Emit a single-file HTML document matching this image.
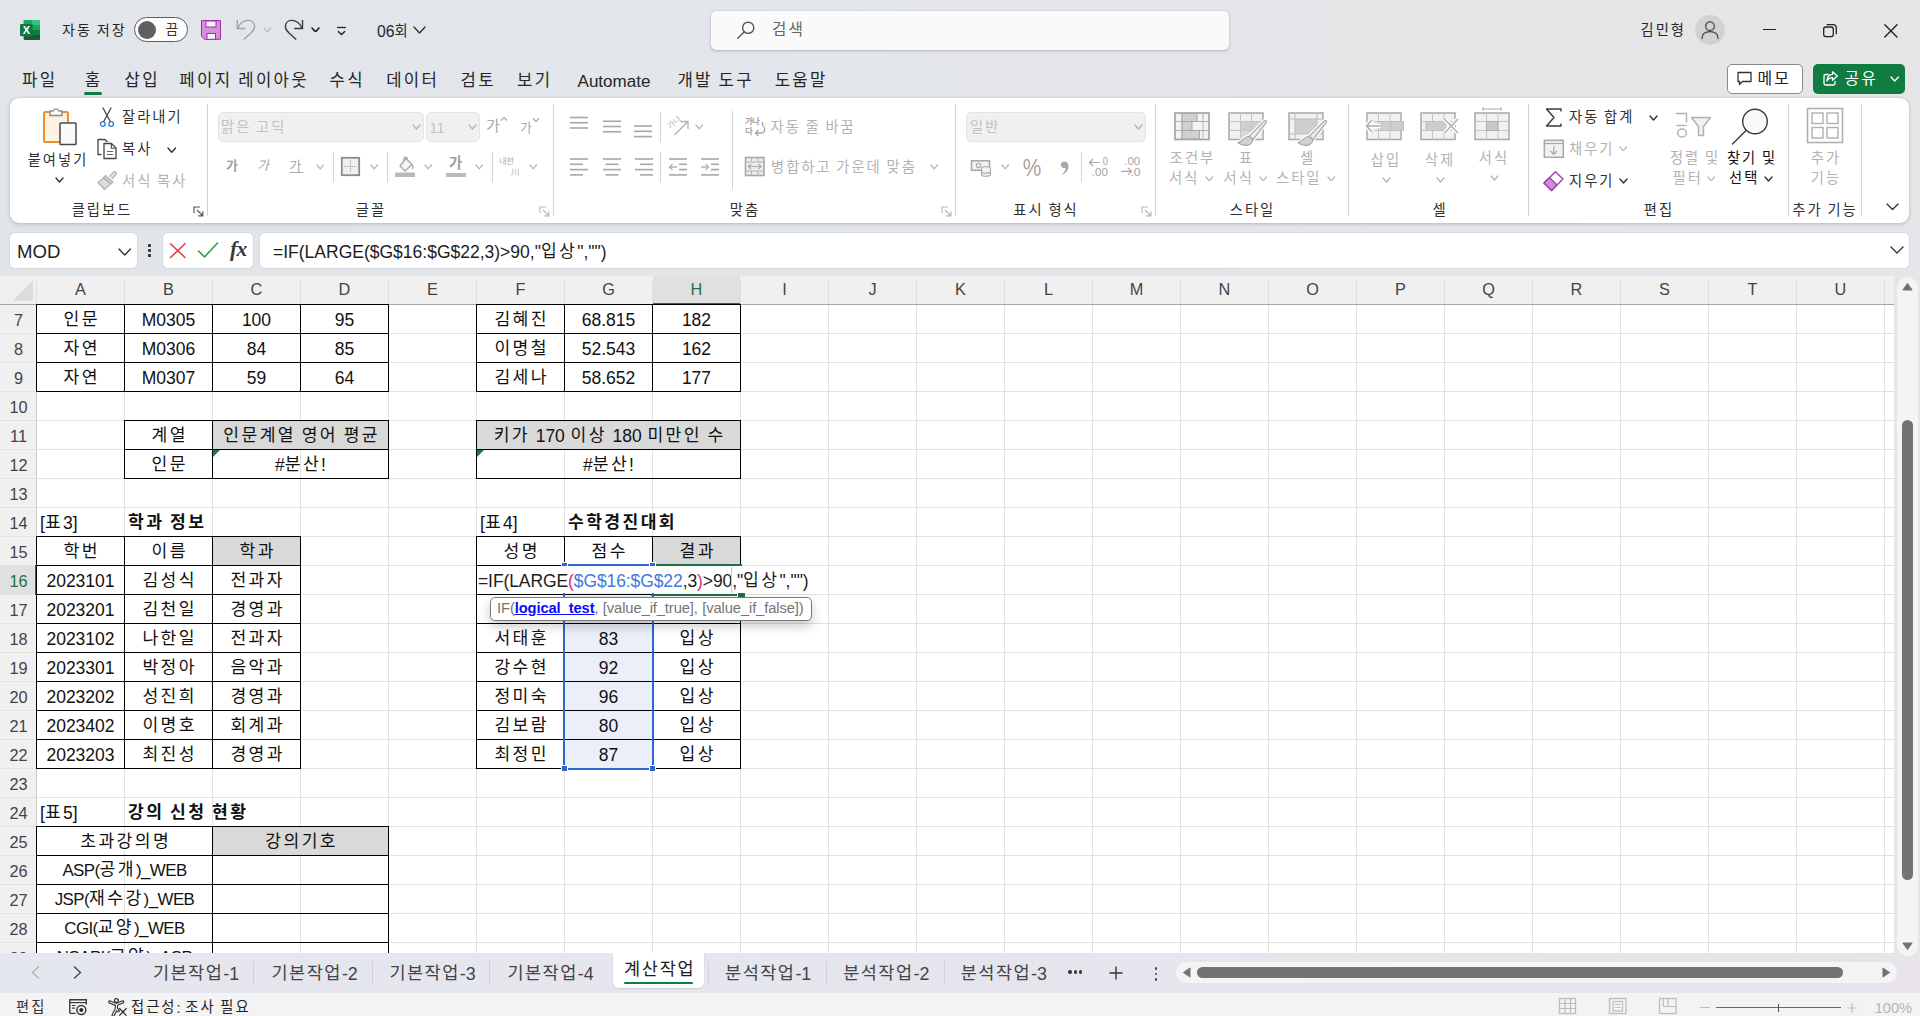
<!DOCTYPE html>
<html lang="ko"><head><meta charset="utf-8"><title>Excel</title><style>
html,body{margin:0;padding:0}
body{width:1920px;height:1016px;overflow:hidden;position:relative;font-family:"Liberation Sans","Noto Sans CJK KR",sans-serif;
background:linear-gradient(to right,#e2e6ea 0%,#e3e6ea 45%,#e5e5e8 70%,#e6e6e6 100%)}
#r{position:absolute;left:0;top:0;width:1920px;height:1016px;overflow:hidden}
#r div,#r svg{position:absolute}

.t{white-space:nowrap;overflow:visible;letter-spacing:.14em;word-spacing:-1.2px}
.l{font-size:1.021em;letter-spacing:0;position:relative;top:.06em}
.lu{font-size:.985em;letter-spacing:-.55px}
.c{box-sizing:border-box;display:flex;align-items:center;justify-content:center;white-space:nowrap;color:#111;overflow:hidden;line-height:28px;padding-bottom:1px;letter-spacing:.14em;word-spacing:-1.5px}
#bb{background:linear-gradient(to right,#e5e7ee 0%,#e6e5ed 50%,#e9e3eb 100%)}
</style></head><body><div id="r">
<div style="left:0;top:215px;width:1920px;height:62px;background:linear-gradient(to right,#e1e5ea 0%,#e3e5ea 50%,#e7e5ea 100%)"></div>
<svg style="left:19px;top:19px;" width="22" height="22" viewBox="0 0 22 22">
<rect x="4.75" y="1" width="16.25" height="20" rx="1.3" fill="#21a366"/>
<path d="M4.75 1 H12.9 V6 H4.75 Z" fill="#21a366"/><path d="M12.9 1 H19.7 A1.3 1.3 0 0 1 21 2.3 V6 H12.9 Z" fill="#33c481"/>
<rect x="4.75" y="6" width="8.15" height="5" fill="#107c41"/><rect x="12.9" y="6" width="8.1" height="5" fill="#21a366"/>
<rect x="4.75" y="11" width="8.15" height="5" fill="#185c37"/><rect x="12.9" y="11" width="8.1" height="5" fill="#107c41"/>
<path d="M4.75 16 H21 V19.7 A1.3 1.3 0 0 1 19.7 21 H6 A1.3 1.3 0 0 1 4.75 19.7 Z" fill="#185c37"/>
<rect x="1" y="5" width="12.8" height="12.3" rx="1.2" fill="#0f7a40"/>
<text x="7.4" y="15.1" font-family="Liberation Sans,sans-serif" font-weight="700" font-size="11" fill="#fff" text-anchor="middle">X</text>
</svg>
<div class="t" style="left:62px;top:18px;width:70px;height:24px;line-height:24px;font-size:14.11px;color:#262626;text-align:left;word-spacing:-1px">자동 저장</div>
<div style="left:134px;top:17px;width:54px;height:25px;border:1px solid #5c5c5c;border-radius:13px;background:#fdfdfd;box-sizing:border-box"></div>
<div style="left:138px;top:21px;width:18px;height:18px;border-radius:50%;background:#5f5f5f"></div>
<div class="t" style="left:160px;top:18px;width:24px;height:24px;line-height:24px;font-size:13.39px;color:#333;text-align:center;text-indent:.14em;">끔</div>
<svg style="left:200px;top:19px;" width="22" height="22" viewBox="0 0 22 22">
<path d="M1.5 1.5 H20.5 V20.3 H4.5 L1.5 17.3 Z" fill="#d58fdc" stroke="#9b2fa5" stroke-width="1"/>
<rect x="6" y="2" width="10" height="6" fill="#fbf3fb" stroke="#9b2fa5" stroke-width="1"/>
<rect x="7" y="14.5" width="8.5" height="5.8" fill="#fbf3fb" stroke="#9b2fa5" stroke-width="1"/>
</svg>
<svg style="left:234px;top:17px;" width="24" height="25" viewBox="234 17 24 25"><path d="M237.3 20 V28.5 H245.4" fill="none" stroke="#a3a3a3" stroke-width="1.4"/><path d="M237.6 28.2 C240 23 244 20.4 248.3 20.4 C252 20.4 254.6 23 254.6 26.7 C254.6 29.5 253 31 251 33 L243.75 39.6" fill="none" stroke="#a3a3a3" stroke-width="1.4"/></svg>
<svg style="left:263px;top:26.5px;" width="8.8" height="5.7" viewBox="0 0 8.8 5.7"><path d="M1 1 L4.4 4.7 L7.8 1" fill="none" stroke="#bdbdbd" stroke-width="1.2" stroke-linecap="round" stroke-linejoin="round"/></svg>
<svg style="left:283px;top:17px;" width="24" height="25" viewBox="283 17 24 25"><path d="M302.5 20 V28.5 H294.2" fill="none" stroke="#3a3a3a" stroke-width="1.4"/><path d="M302.2 28.2 C299.8 23 295.8 20.4 291.5 20.4 C288 20.4 285.4 23 285.4 26.7 C285.4 29.5 287 31 289 33 L296.2 39.6" fill="none" stroke="#3a3a3a" stroke-width="1.4"/></svg>
<svg style="left:311px;top:26.5px;" width="9" height="5.9" viewBox="0 0 9 5.9"><path d="M1 1 L4.5 4.9 L8 1" fill="none" stroke="#222" stroke-width="1.6" stroke-linecap="round" stroke-linejoin="round"/></svg>
<svg style="left:335px;top:24px;" width="14" height="13" viewBox="335 24 14 13"><path d="M337 27.5 H345.8" stroke="#222" stroke-width="1.3"/><path d="M338 31.3 L341.5 34.5 L345 31.3" fill="none" stroke="#222" stroke-width="1.5"/></svg>
<div class="t" style="left:377px;top:19px;width:34px;height:24px;line-height:24px;font-size:14.29px;color:#262626;text-align:left;"><span class="l" style="font-size:1.1em">06</span>회</div>
<svg style="left:413px;top:26px;" width="13" height="8" viewBox="0 0 13 8"><path d="M1 1 L6.5 7 L12 1" fill="none" stroke="#333" stroke-width="1.4" stroke-linecap="round" stroke-linejoin="round"/></svg>
<div style="left:711px;top:11px;width:518px;height:39px;background:#fafafa;border-radius:5px;box-shadow:0 1px 3px rgba(0,0,0,.22),0 0 1px rgba(0,0,0,.18)"></div>
<svg style="left:735px;top:19px;" width="22" height="22" viewBox="0 0 22 22"><circle cx="13.2" cy="8.8" r="5.6" fill="none" stroke="#555" stroke-width="1.4"/><path d="M9.2 12.8 L2.8 19.2" stroke="#555" stroke-width="1.4" stroke-linecap="round"/></svg>
<div class="t" style="left:772px;top:18px;width:60px;height:24px;line-height:24px;font-size:15.63px;color:#666;text-align:left;">검색</div>
<div class="t" style="left:1630px;top:18px;width:56px;height:24px;line-height:24px;font-size:14.29px;color:#262626;text-align:right;">김민형</div>
<div style="left:1695px;top:15px;width:30px;height:30px;border-radius:50%;background:#d2d2d2"></div>
<svg style="left:1699px;top:19px;" width="22" height="22" viewBox="0 0 22 22"><circle cx="11" cy="7.2" r="4.3" fill="none" stroke="#4a4a4a" stroke-width="1.3"/><path d="M3 19.5 C3 14.5 6.5 12.6 11 12.6 C15.5 12.6 19 14.5 19 19.5" fill="none" stroke="#4a4a4a" stroke-width="1.3" stroke-linecap="round"/></svg>
<div style="left:1763px;top:29px;width:13px;height:1.4px;background:#222"></div>
<svg style="left:1822px;top:23px;" width="16" height="16" viewBox="0 0 16 16"><rect x="1.7" y="4" width="9.6" height="9.6" rx="2" fill="none" stroke="#222" stroke-width="1.3"/><path d="M4.6 1.7 H11.3 A3 3 0 0 1 14.3 4.7 V11.2" fill="none" stroke="#222" stroke-width="1.3"/></svg>
<svg style="left:1883px;top:23px;" width="16" height="16" viewBox="0 0 16 16"><path d="M1.8 1.8 L14 14 M14 1.8 L1.8 14" stroke="#222" stroke-width="1.4" stroke-linecap="round"/></svg>
<div class="t" style="left:-41.5px;top:67px;width:160px;height:27px;line-height:27px;font-size:16.7px;color:#262626;text-align:center;text-indent:.14em;">파일</div>
<div class="t" style="left:12.5px;top:67px;width:160px;height:27px;line-height:27px;font-size:16.7px;color:#262626;text-align:center;text-indent:.14em;">홈</div>
<div class="t" style="left:61px;top:67px;width:160px;height:27px;line-height:27px;font-size:16.7px;color:#262626;text-align:center;text-indent:.14em;">삽입</div>
<div class="t" style="left:163px;top:67px;width:160px;height:27px;line-height:27px;font-size:16.7px;color:#262626;text-align:center;text-indent:.14em;">페이지 레이아웃</div>
<div class="t" style="left:266px;top:67px;width:160px;height:27px;line-height:27px;font-size:16.7px;color:#262626;text-align:center;text-indent:.14em;">수식</div>
<div class="t" style="left:331.5px;top:67px;width:160px;height:27px;line-height:27px;font-size:16.7px;color:#262626;text-align:center;text-indent:.14em;">데이터</div>
<div class="t" style="left:397px;top:67px;width:160px;height:27px;line-height:27px;font-size:16.7px;color:#262626;text-align:center;text-indent:.14em;">검토</div>
<div class="t" style="left:453.5px;top:67px;width:160px;height:27px;line-height:27px;font-size:16.7px;color:#262626;text-align:center;text-indent:.14em;">보기</div>
<div class="t" style="left:534px;top:67px;width:160px;height:27px;line-height:27px;font-size:16.7px;color:#262626;text-align:center;"><span class="l">Automate</span></div>
<div class="t" style="left:634.5px;top:67px;width:160px;height:27px;line-height:27px;font-size:16.7px;color:#262626;text-align:center;text-indent:.14em;">개발 도구</div>
<div class="t" style="left:720px;top:67px;width:160px;height:27px;line-height:27px;font-size:16.7px;color:#262626;text-align:center;text-indent:.14em;">도움말</div>
<div style="left:84px;top:92px;width:18px;height:2.5px;background:#107c41;border-radius:1.5px"></div>
<div style="left:1727px;top:64px;width:76px;height:30px;background:#fff;border:1px solid #8a8a8a;border-radius:5px;box-sizing:border-box"></div>
<svg style="left:1736px;top:71px;" width="18" height="16" viewBox="0 0 18 16"><path d="M2 1.5 H15 V10.5 H6.5 L3.5 13.5 V10.5 H2 Z" fill="none" stroke="#333" stroke-width="1.3" stroke-linejoin="round"/></svg>
<div class="t" style="left:1757.5px;top:66px;width:40px;height:26px;line-height:26px;font-size:15.9px;color:#222;text-align:left;">메모</div>
<div style="left:1813px;top:64px;width:92px;height:30px;background:#107c41;border-radius:5px"></div>
<svg style="left:1822px;top:70px;" width="17" height="17" viewBox="0 0 17 17"><path d="M6 4.5 H3.5 A1.5 1.5 0 0 0 2 6 V13.5 A1.5 1.5 0 0 0 3.5 15 H11.5 A1.5 1.5 0 0 0 13 13.5 V11.5" fill="none" stroke="#fff" stroke-width="1.3" stroke-linecap="round"/><path d="M10.5 1.8 L15.3 6 L10.5 10.2 V7.6 C7.5 7.6 6 9 5 11 C5 7 7 4.6 10.5 4.4 Z" fill="none" stroke="#fff" stroke-width="1.3" stroke-linejoin="round"/></svg>
<div class="t" style="left:1844.5px;top:66px;width:40px;height:26px;line-height:26px;font-size:15.9px;color:#fff;text-align:left;">공유</div>
<svg style="left:1889.5px;top:76px;" width="9.5" height="6" viewBox="0 0 9.5 6"><path d="M1 1 L4.75 5 L8.5 1" fill="none" stroke="#fff" stroke-width="1.3" stroke-linecap="round" stroke-linejoin="round"/></svg>
<div style="left:10px;top:98px;width:1899px;height:125px;background:#fff;border-radius:9px;box-shadow:0 1px 4px rgba(0,0,0,.20),0 0 1px rgba(0,0,0,.12)"></div>
<svg style="left:42px;top:106px;" width="37" height="42" viewBox="0 0 37 42">
<rect x="2" y="6" width="24" height="30" rx="1" fill="#fcf3e3" stroke="#e8912d" stroke-width="2"/>
<path d="M8 7.5 V5 H11 A3.2 3.2 0 0 1 17 5 H20 V7.5 V9.5 H8 Z" fill="#fafafa" stroke="#8a8a8a" stroke-width="1.3" stroke-linejoin="round"/>
<rect x="18" y="17" width="16" height="21.5" rx="0.8" fill="#fafafa" stroke="#4a4a4a" stroke-width="1.5"/>
</svg>
<div class="t" style="left:17px;top:148px;width:80px;height:24px;line-height:24px;font-size:14.29px;color:#303030;text-align:center;text-indent:.14em;">붙여넣기</div>
<svg style="left:55px;top:176.5px;" width="9" height="6" viewBox="0 0 9 6"><path d="M1 1 L4.5 5 L8 1" fill="none" stroke="#303030" stroke-width="1.4" stroke-linecap="round" stroke-linejoin="round"/></svg>
<svg style="left:99px;top:106px;" width="16" height="22" viewBox="0 0 16 22"><path d="M4 2 L11.3 15.5 M12 2 L4.7 15.5" stroke="#444" stroke-width="1.3" stroke-linecap="round"/><circle cx="3.8" cy="18" r="2.3" fill="#fff" stroke="#2b7cd3" stroke-width="1.3"/><circle cx="12.2" cy="18" r="2.3" fill="#fff" stroke="#2b7cd3" stroke-width="1.3"/></svg>
<div class="t" style="left:122px;top:105px;width:70px;height:24px;line-height:24px;font-size:14.29px;color:#303030;text-align:left;">잘라내기</div>
<svg style="left:96px;top:138px;" width="22" height="22" viewBox="0 0 22 22"><path d="M5.5 16.5 H2 V1.5 H9 L11.5 4" fill="none" stroke="#444" stroke-width="1.3" stroke-linejoin="round"/><path d="M8 5.5 H15.5 L20 10 V20.5 H8 Z" fill="#fff" stroke="#444" stroke-width="1.3" stroke-linejoin="round"/><path d="M15.3 5.8 V10.2 H19.7" fill="none" stroke="#444" stroke-width="1.1"/><path d="M11 13.5 H17 M11 16.5 H17" stroke="#666" stroke-width="1.1"/></svg>
<div class="t" style="left:122px;top:137px;width:40px;height:24px;line-height:24px;font-size:14.29px;color:#303030;text-align:left;">복사</div>
<svg style="left:166.5px;top:146.5px;" width="9.5" height="6.2" viewBox="0 0 9.5 6.2"><path d="M1 1 L4.75 5.2 L8.5 1" fill="none" stroke="#303030" stroke-width="1.4" stroke-linecap="round" stroke-linejoin="round"/></svg>
<svg style="left:96px;top:170px;" width="22" height="21" viewBox="0 0 22 21"><path d="M13.5 6.5 L17.5 2.2 A1.6 1.6 0 0 1 20 4.5 L16 8.8" fill="#e0e0e0" stroke="#b4b4b4" stroke-width="1.2"/><path d="M9.5 5.5 L17 12 L15 14 L7.5 7.5 Z" fill="#d0d0d0" stroke="#b4b4b4" stroke-width="1.2" stroke-linejoin="round"/><path d="M7.5 8 L2 12.5 L8.5 19.5 L14.5 14 Z" fill="#dcdcdc" stroke="#b4b4b4" stroke-width="1.2" stroke-linejoin="round"/></svg>
<div class="t" style="left:122px;top:169px;width:80px;height:24px;line-height:24px;font-size:14.29px;color:#b2b2b2;text-align:left;">서식 복사</div>
<div class="t" style="left:50px;top:198px;width:102px;height:24px;line-height:24px;font-size:14.29px;color:#303030;text-align:center;text-indent:.14em;">클립보드</div>
<svg style="left:192.5px;top:205.5px;" width="11" height="11" viewBox="0 0 11 11"><path d="M1 7 V1 H7" fill="none" stroke="#555" stroke-width="1.2"/><path d="M4 4 L9.5 9.5 M9.8 5.2 V9.8 H5.2" fill="none" stroke="#555" stroke-width="1.2"/></svg>
<div style="left:207px;top:104px;width:1px;height:112px;background:#d4d4d4"></div>
<div style="left:218px;top:112px;width:206px;height:30px;background:#f0f0f0;border:1px solid #e3e3e3;border-radius:5px;box-sizing:border-box"></div>
<div class="t" style="left:221px;top:114px;width:100px;height:26px;line-height:26px;font-size:14.29px;color:#c2c2c2;text-align:left;">맑은 고딕</div>
<svg style="left:412px;top:124px;" width="9" height="6" viewBox="0 0 9 6"><path d="M1 1 L4.5 5 L8 1" fill="none" stroke="#b4b4b4" stroke-width="1.3" stroke-linecap="round" stroke-linejoin="round"/></svg>
<div style="left:426px;top:112px;width:54px;height:30px;background:#f0f0f0;border:1px solid #e3e3e3;border-radius:5px;box-sizing:border-box"></div>
<div class="t" style="left:429.5px;top:114px;width:30px;height:26px;line-height:26px;font-size:14.29px;color:#c2c2c2;text-align:left;"><span class="l">11</span></div>
<svg style="left:467.5px;top:124px;" width="9" height="6" viewBox="0 0 9 6"><path d="M1 1 L4.5 5 L8 1" fill="none" stroke="#b4b4b4" stroke-width="1.3" stroke-linecap="round" stroke-linejoin="round"/></svg>
<div class="t" style="left:486px;top:113px;width:18px;height:26px;line-height:26px;font-size:15.18px;color:#a8a8a8;text-align:left;">가</div>
<svg style="left:500px;top:116px;" width="8" height="6" viewBox="0 0 8 6"><path d="M1 4.5 L4 1.5 L7 4.5" fill="none" stroke="#a8a8a8" stroke-width="1.2"/></svg>
<div class="t" style="left:520px;top:115px;width:16px;height:26px;line-height:26px;font-size:12.95px;color:#a8a8a8;text-align:left;">가</div>
<svg style="left:532px;top:117px;" width="8" height="6" viewBox="0 0 8 6"><path d="M1 1.5 L4 4.5 L7 1.5" fill="none" stroke="#a8a8a8" stroke-width="1.2"/></svg>
<div class="t" style="left:226px;top:153px;width:16px;height:26px;line-height:26px;font-size:12.95px;color:#a0a0a0;text-align:left;font-weight:700">가</div>
<div class="t" style="left:257px;top:153px;width:16px;height:26px;line-height:26px;font-size:12.95px;color:#a8a8a8;text-align:left;font-style:italic">가</div>
<div class="t" style="left:289.5px;top:153px;width:16px;height:26px;line-height:26px;font-size:12.95px;color:#a8a8a8;text-align:left;text-decoration:underline;text-underline-offset:2px">가</div>
<svg style="left:316px;top:164px;" width="8.5" height="5.8" viewBox="0 0 8.5 5.8"><path d="M1 1 L4.25 4.8 L7.5 1" fill="none" stroke="#b4b4b4" stroke-width="1.2" stroke-linecap="round" stroke-linejoin="round"/></svg>
<div style="left:333px;top:152px;width:1px;height:30px;background:#d4d4d4"></div>
<svg style="left:340px;top:156px;" width="21" height="21" viewBox="0 0 21 21"><rect x="1.8" y="1.8" width="17.4" height="17.4" fill="#f1f1f1" stroke="#8c8c8c" stroke-width="1.8"/><path d="M10.5 4.5 V16.5 M4.5 10.5 H16.5" stroke="#9a9a9a" stroke-width="1" stroke-dasharray="1.2 1.2"/></svg>
<svg style="left:370px;top:164px;" width="8.5" height="5.8" viewBox="0 0 8.5 5.8"><path d="M1 1 L4.25 4.8 L7.5 1" fill="none" stroke="#b4b4b4" stroke-width="1.2" stroke-linecap="round" stroke-linejoin="round"/></svg>
<div style="left:387px;top:152px;width:1px;height:30px;background:#d4d4d4"></div>
<svg style="left:394px;top:155px;" width="22" height="23" viewBox="0 0 22 23"><path d="M6 11 L12 3.5 L18 9.5 L11 16 Z" fill="#f4f4f4" stroke="#a6a6a6" stroke-width="1.3" stroke-linejoin="round"/><path d="M10 5.5 C9 1.5 13 0.8 13.5 4.5" fill="none" stroke="#a6a6a6" stroke-width="1.2"/><path d="M17.5 9.5 C19 11 19 13 18 14" fill="none" stroke="#a6a6a6" stroke-width="1.2"/><rect x="1" y="17.5" width="20" height="4.5" fill="#b9b9b9"/></svg>
<svg style="left:424px;top:164px;" width="8.5" height="5.8" viewBox="0 0 8.5 5.8"><path d="M1 1 L4.25 4.8 L7.5 1" fill="none" stroke="#b4b4b4" stroke-width="1.2" stroke-linecap="round" stroke-linejoin="round"/></svg>
<div class="t" style="left:449px;top:151px;width:18px;height:24px;line-height:24px;font-size:14.29px;color:#a0a0a0;text-align:left;font-weight:700">가</div>
<div style="left:446px;top:172.5px;width:20px;height:4.5px;background:#b9b9b9"></div>
<svg style="left:475px;top:164px;" width="8.5" height="5.8" viewBox="0 0 8.5 5.8"><path d="M1 1 L4.25 4.8 L7.5 1" fill="none" stroke="#b4b4b4" stroke-width="1.2" stroke-linecap="round" stroke-linejoin="round"/></svg>
<div style="left:492px;top:152px;width:1px;height:30px;background:#d4d4d4"></div>
<div class="t" style="left:499px;top:155px;width:22px;height:12px;line-height:12px;font-size:8.48px;color:#b0b0b0;text-align:left;letter-spacing:-0.5px">내천</div>
<div class="t" style="left:511px;top:166px;width:12px;height:12px;line-height:12px;font-size:8.48px;color:#b0b0b0;text-align:left;">川</div>
<svg style="left:529px;top:164px;" width="8.5" height="5.8" viewBox="0 0 8.5 5.8"><path d="M1 1 L4.25 4.8 L7.5 1" fill="none" stroke="#b4b4b4" stroke-width="1.2" stroke-linecap="round" stroke-linejoin="round"/></svg>
<div class="t" style="left:340px;top:198px;width:60px;height:24px;line-height:24px;font-size:14.29px;color:#303030;text-align:center;text-indent:.14em;">글꼴</div>
<svg style="left:538.5px;top:205.5px;" width="11" height="11" viewBox="0 0 11 11"><path d="M1 7 V1 H7" fill="none" stroke="#b9b9b9" stroke-width="1.2"/><path d="M4 4 L9.5 9.5 M9.8 5.2 V9.8 H5.2" fill="none" stroke="#b9b9b9" stroke-width="1.2"/></svg>
<div style="left:553px;top:104px;width:1px;height:112px;background:#d4d4d4"></div>
<svg style="left:569px;top:113px;" width="20" height="20" viewBox="0 0 20 20"><path d="M1 4.5 H19" stroke="#a9a9a9" stroke-width="1.65"/><path d="M1 9.75 H19" stroke="#a9a9a9" stroke-width="1.65"/><path d="M1 15 H19" stroke="#a9a9a9" stroke-width="1.65"/></svg>
<svg style="left:601.5px;top:113px;" width="20" height="20" viewBox="0 0 20 20"><path d="M1 8.25 H19" stroke="#a9a9a9" stroke-width="1.65"/><path d="M1 13.5 H19" stroke="#a9a9a9" stroke-width="1.65"/><path d="M1 18.75 H19" stroke="#a9a9a9" stroke-width="1.65"/></svg>
<svg style="left:633px;top:120px;" width="20" height="20" viewBox="0 0 20 20"><path d="M1 6 H19" stroke="#a9a9a9" stroke-width="1.65"/><path d="M1 11.3 H19" stroke="#a9a9a9" stroke-width="1.65"/><path d="M1 16.6 H19" stroke="#a9a9a9" stroke-width="1.65"/></svg>
<div style="left:660px;top:112px;width:1px;height:30px;background:#d4d4d4"></div>
<svg style="left:667px;top:115px;" width="23" height="22" viewBox="0 0 23 22"><path d="M7.5 20 L20.5 7 M13.5 6.5 H21 V14" fill="none" stroke="#b0b0b0" stroke-width="1.3"/><text x="0" y="11" font-size="8" fill="#b0b0b0" font-family="Liberation Sans,Noto Sans CJK KR,sans-serif" transform="rotate(-40 6 8)">가나</text></svg>
<svg style="left:695px;top:124px;" width="8.5" height="5.8" viewBox="0 0 8.5 5.8"><path d="M1 1 L4.25 4.8 L7.5 1" fill="none" stroke="#b4b4b4" stroke-width="1.2" stroke-linecap="round" stroke-linejoin="round"/></svg>
<svg style="left:569px;top:158px;" width="20" height="19" viewBox="0 0 20 19"><path d="M1 1 H19" stroke="#a9a9a9" stroke-width="1.65"/><path d="M1 6.3 H14" stroke="#a9a9a9" stroke-width="1.65"/><path d="M1 11.6 H19" stroke="#a9a9a9" stroke-width="1.65"/><path d="M1 16.9 H14" stroke="#a9a9a9" stroke-width="1.65"/></svg>
<svg style="left:601.5px;top:158px;" width="20" height="19" viewBox="0 0 20 19"><path d="M1 1 H19" stroke="#a9a9a9" stroke-width="1.65"/><path d="M3.5 6.3 H16.5" stroke="#a9a9a9" stroke-width="1.65"/><path d="M1 11.6 H19" stroke="#a9a9a9" stroke-width="1.65"/><path d="M3.5 16.9 H16.5" stroke="#a9a9a9" stroke-width="1.65"/></svg>
<svg style="left:633.5px;top:158px;" width="20" height="19" viewBox="0 0 20 19"><path d="M1 1 H19" stroke="#a9a9a9" stroke-width="1.65"/><path d="M6 6.3 H19" stroke="#a9a9a9" stroke-width="1.65"/><path d="M1 11.6 H19" stroke="#a9a9a9" stroke-width="1.65"/><path d="M6 16.9 H19" stroke="#a9a9a9" stroke-width="1.65"/></svg>
<div style="left:660px;top:152px;width:1px;height:30px;background:#d4d4d4"></div>
<svg style="left:668px;top:158px;" width="20" height="19" viewBox="0 0 20 19"><path d="M1 1 H19" stroke="#a9a9a9" stroke-width="1.65"/><path d="M11 6.3 H19" stroke="#a9a9a9" stroke-width="1.65"/><path d="M11 11.6 H19" stroke="#a9a9a9" stroke-width="1.65"/><path d="M1 16.9 H19" stroke="#a9a9a9" stroke-width="1.65"/><path d="M1.5 9 H9 M4.5 6 L1.5 9 L4.5 12" fill="none" stroke="#b4b4b4" stroke-width="1.3"/></svg>
<svg style="left:700px;top:158px;" width="20" height="19" viewBox="0 0 20 19"><path d="M1 1 H19" stroke="#a9a9a9" stroke-width="1.65"/><path d="M11 6.3 H19" stroke="#a9a9a9" stroke-width="1.65"/><path d="M11 11.6 H19" stroke="#a9a9a9" stroke-width="1.65"/><path d="M1 16.9 H19" stroke="#a9a9a9" stroke-width="1.65"/><path d="M1 9 H8.5 M5.5 6 L8.5 9 L5.5 12" fill="none" stroke="#b4b4b4" stroke-width="1.3"/></svg>
<div style="left:732px;top:111px;width:1px;height:78px;background:#d4d4d4"></div>
<div class="t" style="left:745px;top:116px;width:20px;height:10px;line-height:10px;font-size:8.48px;color:#a4a4a4;text-align:left;font-weight:700;letter-spacing:-0.8px">가나</div>
<div class="t" style="left:745px;top:126px;width:10px;height:10px;line-height:10px;font-size:8.48px;color:#a4a4a4;text-align:left;font-weight:700">다</div>
<svg style="left:753px;top:121px;" width="14" height="17" viewBox="0 0 14 17"><path d="M9.5 1 V4.5 C12.5 6 12.5 12 8 12 H2.5 M5.5 9 L2.5 12 L5.5 15" fill="none" stroke="#a4a4a4" stroke-width="1.3"/></svg>
<div class="t" style="left:770.5px;top:115px;width:100px;height:24px;line-height:24px;font-size:14.29px;color:#b2b2b2;text-align:left;">자동 줄 바꿈</div>
<svg style="left:744px;top:156px;" width="22" height="21" viewBox="0 0 22 21"><rect x="1.5" y="1.5" width="18.5" height="18" fill="#ececec" stroke="#a8a8a8" stroke-width="1.6"/><path d="M1.5 6 H20 M1.5 15 H20 M7.5 1.5 V6 M14 1.5 V6 M7.5 15 V19.5 M14 15 V19.5" stroke="#b4b4b4" stroke-width="1.1"/><path d="M4.5 10.5 H17 M7 8 L4.5 10.5 L7 13 M14.5 8 L17 10.5 L14.5 13" fill="none" stroke="#a8a8a8" stroke-width="1.2"/></svg>
<div class="t" style="left:771px;top:155px;width:160px;height:24px;line-height:24px;font-size:14.29px;color:#b2b2b2;text-align:left;">병합하고 가운데 맞춤</div>
<svg style="left:930px;top:164px;" width="8.5" height="5.8" viewBox="0 0 8.5 5.8"><path d="M1 1 L4.25 4.8 L7.5 1" fill="none" stroke="#b4b4b4" stroke-width="1.2" stroke-linecap="round" stroke-linejoin="round"/></svg>
<div class="t" style="left:704px;top:198px;width:80px;height:24px;line-height:24px;font-size:14.29px;color:#303030;text-align:center;text-indent:.14em;">맞춤</div>
<svg style="left:940.5px;top:205.5px;" width="11" height="11" viewBox="0 0 11 11"><path d="M1 7 V1 H7" fill="none" stroke="#b9b9b9" stroke-width="1.2"/><path d="M4 4 L9.5 9.5 M9.8 5.2 V9.8 H5.2" fill="none" stroke="#b9b9b9" stroke-width="1.2"/></svg>
<div style="left:955px;top:104px;width:1px;height:112px;background:#d4d4d4"></div>
<div style="left:966px;top:112px;width:180px;height:30px;background:#f0f0f0;border:1px solid #e3e3e3;border-radius:5px;box-sizing:border-box"></div>
<div class="t" style="left:970px;top:114px;width:60px;height:26px;line-height:26px;font-size:14.29px;color:#c2c2c2;text-align:left;">일반</div>
<svg style="left:1133.5px;top:124px;" width="9" height="6" viewBox="0 0 9 6"><path d="M1 1 L4.5 5 L8 1" fill="none" stroke="#b4b4b4" stroke-width="1.3" stroke-linecap="round" stroke-linejoin="round"/></svg>
<svg style="left:970px;top:159px;" width="23" height="19" viewBox="0 0 23 19"><rect x="1.5" y="1.8" width="18" height="9.5" fill="#f2f2f2" stroke="#a6a6a6" stroke-width="1.5"/><circle cx="8.5" cy="6.5" r="2.2" fill="none" stroke="#a6a6a6" stroke-width="1.1"/><ellipse cx="16" cy="9.5" rx="4.5" ry="1.8" fill="#f2f2f2" stroke="#a6a6a6" stroke-width="1.1"/><path d="M11.5 9.5 V15.5 A4.5 1.8 0 0 0 20.5 15.5 V9.5 M11.5 12.5 A4.5 1.8 0 0 0 20.5 12.5" fill="#f2f2f2" stroke="#a6a6a6" stroke-width="1.1"/></svg>
<svg style="left:1000.5px;top:164px;" width="8.5" height="5.8" viewBox="0 0 8.5 5.8"><path d="M1 1 L4.25 4.8 L7.5 1" fill="none" stroke="#b4b4b4" stroke-width="1.2" stroke-linecap="round" stroke-linejoin="round"/></svg>
<div class="t" style="left:1018px;top:154px;width:28px;height:26px;line-height:26px;font-size:23.66px;color:#a4a4a4;text-align:center;transform:scaleX(.86)"><span class="l">%</span></div>
<svg style="left:1059px;top:160px;" width="11" height="18" viewBox="0 0 11 18"><path d="M5.2 1.5 A3.3 3.3 0 1 0 6.5 7.8 C6.5 11 4.5 13.5 2 15.2 C6.5 14 9.5 10 9.5 6 C9.5 3 7.5 1.5 5.2 1.5 Z" fill="#a8a8a8"/></svg>
<div style="left:1081px;top:152px;width:1px;height:30px;background:#d4d4d4"></div>
<svg style="left:1088px;top:155px;" width="22" height="23" viewBox="0 0 22 23"><path d="M1.5 7.5 H11.5 M5 4 L1.5 7.5 L5 11" fill="none" stroke="#a8a8a8" stroke-width="1.2"/><text x="14.7" y="10.3" textLength="5.2" font-size="11.3" font-family="Liberation Sans,sans-serif" fill="#a4a4a4" lengthAdjust="spacingAndGlyphs">0</text><text x="3.8" y="20.9" textLength="16" font-size="11.3" font-family="Liberation Sans,sans-serif" fill="#a4a4a4" lengthAdjust="spacingAndGlyphs">.00</text></svg>
<svg style="left:1119px;top:155px;" width="23" height="23" viewBox="0 0 23 23"><text x="5.2" y="10.3" textLength="16" font-size="11.3" font-family="Liberation Sans,sans-serif" fill="#a4a4a4" lengthAdjust="spacingAndGlyphs">.00</text><path d="M2 16.3 H12.5 M9 12.8 L12.5 16.3 L9 19.8" fill="none" stroke="#a8a8a8" stroke-width="1.2"/><text x="11.3" y="20.9" textLength="10" font-size="11.3" font-family="Liberation Sans,sans-serif" fill="#a4a4a4" lengthAdjust="spacingAndGlyphs">.0</text></svg>
<div class="t" style="left:1000px;top:198px;width:90px;height:24px;line-height:24px;font-size:14.29px;color:#303030;text-align:center;text-indent:.14em;">표시 형식</div>
<svg style="left:1141px;top:205.5px;" width="11" height="11" viewBox="0 0 11 11"><path d="M1 7 V1 H7" fill="none" stroke="#b9b9b9" stroke-width="1.2"/><path d="M4 4 L9.5 9.5 M9.8 5.2 V9.8 H5.2" fill="none" stroke="#b9b9b9" stroke-width="1.2"/></svg>
<div style="left:1155px;top:104px;width:1px;height:112px;background:#d4d4d4"></div>
<svg style="left:1174px;top:112px;" width="36" height="29" viewBox="0 0 36 29"><rect x="1" y="1" width="34" height="26.5" fill="#f3f3f3" stroke="#a0a0a0" stroke-width="1.6"/><path d="M1 9.5 H35 M1 18.5 H35 M8 1 V27.5 M29 1 V27.5" stroke="#b4b4b4" stroke-width="1"/><rect x="8" y="1.5" width="15" height="8" fill="#d0d0d0" stroke="#a8a8a8"/><rect x="8" y="9.5" width="10" height="9" fill="#d0d0d0" stroke="#a8a8a8"/><rect x="8" y="18.5" width="17.5" height="8.5" fill="#d0d0d0" stroke="#a8a8a8"/></svg>
<div class="t" style="left:1150px;top:146px;width:83px;height:24px;line-height:24px;font-size:14.29px;color:#b2b2b2;text-align:center;text-indent:.14em;">조건부</div>
<div class="t" style="left:1169px;top:166px;width:34px;height:24px;line-height:24px;font-size:14.29px;color:#b2b2b2;text-align:left;">서식</div>
<svg style="left:1204.5px;top:175.5px;" width="8.5" height="5.8" viewBox="0 0 8.5 5.8"><path d="M1 1 L4.25 4.8 L7.5 1" fill="none" stroke="#b4b4b4" stroke-width="1.2" stroke-linecap="round" stroke-linejoin="round"/></svg>
<svg style="left:1228px;top:112px;" width="40" height="36" viewBox="0 0 40 36"><rect x="1" y="1" width="34" height="26.5" fill="#f1f1f1" stroke="#a8a8a8" stroke-width="1.5"/><rect x="12.5" y="9.5" width="22" height="9" fill="#cfcfcf"/><rect x="12.5" y="18.5" width="11" height="8.5" fill="#dadada"/><path d="M1 9.5 H35 M1 18.5 H35 M12.5 1 V27.5 M23.5 1 V27.5" stroke="#c4c4c4" stroke-width="1"/><g transform="translate(-1228,-112)"><path d="M1266.4 122.3 L1252.95 139.7 L1249.05 136.3 L1264.6 120.7 Q1266.8 119.8 1266.4 122.3 Z M1249 136.3 C1244 136.5 1243 141 1238 142.8 C1243 146.5 1251.5 147 1253 139.7 Z" fill="#fff" stroke="#fff" stroke-width="3.6" stroke-linejoin="round"/><path d="M1266.4 122.3 L1252.95 139.7 L1249.05 136.3 L1264.6 120.7 Q1266.8 119.8 1266.4 122.3 Z" fill="#ebebeb" stroke="#a6a6a6" stroke-width="1.15" stroke-linejoin="round"/><path d="M1249 136.3 C1244 136.5 1243 141 1238 142.8 C1243 146.5 1251.5 147 1253 139.7 Z" fill="#d2d2d2" stroke="#a6a6a6" stroke-width="1.15" stroke-linejoin="round"/></g></svg>
<div class="t" style="left:1225px;top:146px;width:41px;height:24px;line-height:24px;font-size:14.29px;color:#b2b2b2;text-align:center;text-indent:.14em;">표</div>
<div class="t" style="left:1223.5px;top:166px;width:34px;height:24px;line-height:24px;font-size:14.29px;color:#b2b2b2;text-align:left;">서식</div>
<svg style="left:1258.5px;top:175.5px;" width="8.5" height="5.8" viewBox="0 0 8.5 5.8"><path d="M1 1 L4.25 4.8 L7.5 1" fill="none" stroke="#b4b4b4" stroke-width="1.2" stroke-linecap="round" stroke-linejoin="round"/></svg>
<svg style="left:1288px;top:112px;" width="40" height="36" viewBox="0 0 40 36"><rect x="1" y="1" width="34" height="26.5" fill="#f1f1f1" stroke="#a8a8a8" stroke-width="1.5"/><rect x="7" y="7" width="22" height="15" fill="#cfcfcf"/><path d="M1 7 H35 M1 22 H35 M7 1 V27.5 M29 1 V27.5" stroke="#bdbdbd" stroke-width="1"/><g transform="translate(-1228,-112)"><path d="M1266.4 122.3 L1252.95 139.7 L1249.05 136.3 L1264.6 120.7 Q1266.8 119.8 1266.4 122.3 Z M1249 136.3 C1244 136.5 1243 141 1238 142.8 C1243 146.5 1251.5 147 1253 139.7 Z" fill="#fff" stroke="#fff" stroke-width="3.6" stroke-linejoin="round"/><path d="M1266.4 122.3 L1252.95 139.7 L1249.05 136.3 L1264.6 120.7 Q1266.8 119.8 1266.4 122.3 Z" fill="#ebebeb" stroke="#a6a6a6" stroke-width="1.15" stroke-linejoin="round"/><path d="M1249 136.3 C1244 136.5 1243 141 1238 142.8 C1243 146.5 1251.5 147 1253 139.7 Z" fill="#d2d2d2" stroke="#a6a6a6" stroke-width="1.15" stroke-linejoin="round"/></g></svg>
<div class="t" style="left:1286px;top:146px;width:41px;height:24px;line-height:24px;font-size:14.29px;color:#b2b2b2;text-align:center;text-indent:.14em;">셀</div>
<div class="t" style="left:1276px;top:166px;width:50px;height:24px;line-height:24px;font-size:14.29px;color:#b2b2b2;text-align:left;">스타일</div>
<svg style="left:1326.5px;top:175.5px;" width="8.5" height="5.8" viewBox="0 0 8.5 5.8"><path d="M1 1 L4.25 4.8 L7.5 1" fill="none" stroke="#b4b4b4" stroke-width="1.2" stroke-linecap="round" stroke-linejoin="round"/></svg>
<div class="t" style="left:1210px;top:198px;width:83px;height:24px;line-height:24px;font-size:14.29px;color:#303030;text-align:center;text-indent:.14em;">스타일</div>
<div style="left:1348px;top:104px;width:1px;height:112px;background:#d4d4d4"></div>
<svg style="left:1364px;top:112px;" width="44" height="30" viewBox="0 0 44 30"><rect x="3" y="1" width="34" height="26.5" fill="#f1f1f1" stroke="#a8a8a8" stroke-width="1.5"/><path d="M3 9.5 H37 M3 18.5 H37 M14.5 1 V27.5 M26 1 V27.5" stroke="#c4c4c4" stroke-width="1"/><rect x="16" y="9.5" width="23.5" height="9" fill="#cdcdcd" stroke="#c0c0c0" stroke-width="1"/><path d="M27 9.5 V18.5" stroke="#bdbdbd"/><path d="M2.5 14 H17 M8 8 L2.5 14 L8 20" fill="none" stroke="#fff" stroke-width="4.5"/><path d="M2.5 14 H17 M8 8 L2.5 14 L8 20" fill="none" stroke="#b0b0b0" stroke-width="1.6"/></svg>
<div class="t" style="left:1354px;top:148px;width:62px;height:24px;line-height:24px;font-size:14.29px;color:#b2b2b2;text-align:center;text-indent:.14em;">삽입</div>
<svg style="left:1382px;top:176.5px;" width="9" height="6" viewBox="0 0 9 6"><path d="M1 1 L4.5 5 L8 1" fill="none" stroke="#b4b4b4" stroke-width="1.3" stroke-linecap="round" stroke-linejoin="round"/></svg>
<svg style="left:1418px;top:112px;" width="44" height="30" viewBox="0 0 44 30"><rect x="3" y="1" width="34" height="26.5" fill="#f1f1f1" stroke="#a8a8a8" stroke-width="1.5"/><path d="M3 9.5 H37 M3 18.5 H37 M14.5 1 V27.5 M26 1 V27.5" stroke="#c4c4c4" stroke-width="1"/><rect x="8" y="9.5" width="20" height="9" fill="#cdcdcd" stroke="#c0c0c0" stroke-width="1"/><path d="M26.5 7 L40 21 M40 7 L26.5 21" stroke="#fff" stroke-width="4.5"/><path d="M26.5 7 L40 21 M40 7 L26.5 21" stroke="#b0b0b0" stroke-width="1.6"/></svg>
<div class="t" style="left:1408px;top:148px;width:62px;height:24px;line-height:24px;font-size:14.29px;color:#b2b2b2;text-align:center;text-indent:.14em;">삭제</div>
<svg style="left:1436px;top:176.5px;" width="9" height="6" viewBox="0 0 9 6"><path d="M1 1 L4.5 5 L8 1" fill="none" stroke="#b4b4b4" stroke-width="1.3" stroke-linecap="round" stroke-linejoin="round"/></svg>
<svg style="left:1472px;top:105px;" width="44" height="37" viewBox="0 0 44 37"><path d="M11 2.5 V5.5 M29 2.5 V5.5 M11 4 H29" stroke="#a8a8a8" stroke-width="1.2"/><g transform="translate(0,7)"><rect x="3" y="1" width="34" height="26.5" fill="#f1f1f1" stroke="#a8a8a8" stroke-width="1.5"/><path d="M3 9.5 H37 M3 18.5 H37 M14.5 1 V27.5 M26 1 V27.5" stroke="#c4c4c4" stroke-width="1"/><rect x="14.5" y="9.5" width="11.5" height="9" fill="#c8c8c8" stroke="#b0b0b0"/></g></svg>
<div class="t" style="left:1462px;top:146px;width:62px;height:24px;line-height:24px;font-size:14.29px;color:#b2b2b2;text-align:center;text-indent:.14em;">서식</div>
<svg style="left:1490px;top:175px;" width="9" height="6" viewBox="0 0 9 6"><path d="M1 1 L4.5 5 L8 1" fill="none" stroke="#b4b4b4" stroke-width="1.3" stroke-linecap="round" stroke-linejoin="round"/></svg>
<div class="t" style="left:1408px;top:198px;width:62px;height:24px;line-height:24px;font-size:14.29px;color:#303030;text-align:center;text-indent:.14em;">셀</div>
<div style="left:1528px;top:104px;width:1px;height:112px;background:#d4d4d4"></div>
<svg style="left:1544px;top:107px;" width="20" height="21" viewBox="0 0 20 21"><path d="M17 4.5 V2 H2.5 L10 10.5 L2.5 19 H17 V16.5" fill="none" stroke="#3a3a3a" stroke-width="1.4" stroke-linejoin="round"/></svg>
<div class="t" style="left:1569px;top:105px;width:80px;height:24px;line-height:24px;font-size:14.29px;color:#303030;text-align:left;">자동 합계</div>
<svg style="left:1649px;top:114.5px;" width="9" height="6" viewBox="0 0 9 6"><path d="M1 1 L4.5 5 L8 1" fill="none" stroke="#303030" stroke-width="1.4" stroke-linecap="round" stroke-linejoin="round"/></svg>
<svg style="left:1543px;top:139px;" width="22" height="20" viewBox="0 0 22 20"><rect x="1.3" y="1.3" width="19" height="17" fill="#f1f1f1" stroke="#a8a8a8" stroke-width="1.5"/><path d="M1.3 4.5 H20.3" stroke="#a8a8a8" stroke-width="1.2"/><path d="M10.8 7.5 V15 M7.5 12 L10.8 15.3 L14 12" fill="none" stroke="#a8a8a8" stroke-width="1.2"/></svg>
<div class="t" style="left:1569px;top:136.5px;width:50px;height:24px;line-height:24px;font-size:14.29px;color:#b2b2b2;text-align:left;">채우기</div>
<svg style="left:1619px;top:145.5px;" width="8.5" height="5.8" viewBox="0 0 8.5 5.8"><path d="M1 1 L4.25 4.8 L7.5 1" fill="none" stroke="#b4b4b4" stroke-width="1.2" stroke-linecap="round" stroke-linejoin="round"/></svg>
<svg style="left:1542px;top:170px;" width="23" height="22" viewBox="0 0 23 22"><path d="M2 13 L13.5 1.8 L21 9 L9.5 20.5 Z" fill="#fff" stroke="#a13fb0" stroke-width="1.4" stroke-linejoin="round"/><path d="M2 13 L7.5 7.6 L15 15 L9.5 20.5 Z" fill="#cf8bd8" stroke="#a13fb0" stroke-width="1.4" stroke-linejoin="round"/></svg>
<div class="t" style="left:1569px;top:168.5px;width:50px;height:24px;line-height:24px;font-size:14.29px;color:#303030;text-align:left;">지우기</div>
<svg style="left:1619px;top:177.5px;" width="9" height="6" viewBox="0 0 9 6"><path d="M1 1 L4.5 5 L8 1" fill="none" stroke="#303030" stroke-width="1.4" stroke-linecap="round" stroke-linejoin="round"/></svg>
<svg style="left:1674px;top:111px;" width="40" height="31" viewBox="0 0 40 31"><path d="M2 2.5 H12.5 V11.5" fill="none" stroke="#b0b0b0" stroke-width="1.4"/><path d="M2.5 14.5 H12.5" stroke="#b0b0b0" stroke-width="1.4"/><ellipse cx="8" cy="22" rx="4.5" ry="4" fill="none" stroke="#b0b0b0" stroke-width="1.4"/><path d="M17.5 6.5 H36.5 L29.5 15.5 V24.5 H24.5 V15.5 Z" fill="#f1f1f1" stroke="#b0b0b0" stroke-width="1.4" stroke-linejoin="round"/></svg>
<div class="t" style="left:1659px;top:146px;width:70px;height:24px;line-height:24px;font-size:14.29px;color:#b2b2b2;text-align:center;text-indent:.14em;">정렬 및</div>
<div class="t" style="left:1672.5px;top:166px;width:34px;height:24px;line-height:24px;font-size:14.29px;color:#b2b2b2;text-align:left;">필터</div>
<svg style="left:1707px;top:175.5px;" width="8.5" height="5.8" viewBox="0 0 8.5 5.8"><path d="M1 1 L4.25 4.8 L7.5 1" fill="none" stroke="#b4b4b4" stroke-width="1.2" stroke-linecap="round" stroke-linejoin="round"/></svg>
<svg style="left:1731px;top:107px;" width="40" height="40" viewBox="0 0 40 40"><circle cx="24" cy="14.5" r="12.3" fill="#fafafa" stroke="#3a3a3a" stroke-width="1.4"/><path d="M15 23.5 L1.5 37" stroke="#3a3a3a" stroke-width="1.4" stroke-linecap="round"/></svg>
<div class="t" style="left:1716px;top:146px;width:70px;height:24px;line-height:24px;font-size:14.29px;color:#111;text-align:center;text-indent:.14em;">찾기 및</div>
<div class="t" style="left:1729px;top:166px;width:34px;height:24px;line-height:24px;font-size:14.29px;color:#111;text-align:left;">선택</div>
<svg style="left:1764px;top:175.5px;" width="9" height="6" viewBox="0 0 9 6"><path d="M1 1 L4.5 5 L8 1" fill="none" stroke="#303030" stroke-width="1.4" stroke-linecap="round" stroke-linejoin="round"/></svg>
<div class="t" style="left:1628px;top:198px;width:60px;height:24px;line-height:24px;font-size:14.29px;color:#303030;text-align:center;text-indent:.14em;">편집</div>
<div style="left:1788px;top:104px;width:1px;height:112px;background:#d4d4d4"></div>
<svg style="left:1806px;top:107px;" width="38" height="37" viewBox="0 0 38 37"><rect x="1.5" y="1.5" width="35" height="34" fill="none" stroke="#b0b0b0" stroke-width="1.6"/><rect x="6" y="6" width="11" height="10.5" fill="none" stroke="#b0b0b0" stroke-width="1.4"/><rect x="21" y="6" width="11" height="10.5" fill="none" stroke="#b0b0b0" stroke-width="1.4"/><rect x="6" y="20.5" width="11" height="10.5" fill="none" stroke="#b0b0b0" stroke-width="1.4"/><rect x="21" y="20.5" width="11" height="10.5" fill="none" stroke="#b0b0b0" stroke-width="1.4"/></svg>
<div class="t" style="left:1794px;top:146px;width:62px;height:24px;line-height:24px;font-size:14.29px;color:#b2b2b2;text-align:center;text-indent:.14em;">추가</div>
<div class="t" style="left:1794px;top:166px;width:62px;height:24px;line-height:24px;font-size:14.29px;color:#b2b2b2;text-align:center;text-indent:.14em;">기능</div>
<div class="t" style="left:1789px;top:198px;width:70px;height:24px;line-height:24px;font-size:14.29px;color:#303030;text-align:center;text-indent:.14em;">추가 기능</div>
<div style="left:1861px;top:104px;width:1px;height:112px;background:#d4d4d4"></div>
<svg style="left:1885.5px;top:202.5px;" width="13" height="7.5" viewBox="0 0 13 7.5"><path d="M1 1 L6.5 6.5 L12 1" fill="none" stroke="#333" stroke-width="1.4" stroke-linecap="round" stroke-linejoin="round"/></svg>
<div style="left:10px;top:233px;width:127px;height:35px;background:#fff;border-radius:5px;box-shadow:0 0 0 1px rgba(0,0,0,.05)"></div>
<div class="t" style="left:17px;top:238px;width:60px;height:26px;line-height:26px;font-size:18.22px;color:#222;text-align:left;"><span class="l">MOD</span></div>
<svg style="left:117.5px;top:248px;" width="13.5" height="8" viewBox="0 0 13.5 8"><path d="M1 1 L6.75 7 L12.5 1" fill="none" stroke="#333" stroke-width="1.4" stroke-linecap="round" stroke-linejoin="round"/></svg>
<div style="left:148px;top:244px;width:3.2px;height:3.2px;background:#3c3c3c;border-radius:.5px"></div>
<div style="left:148px;top:249.2px;width:3.2px;height:3.2px;background:#3c3c3c;border-radius:.5px"></div>
<div style="left:148px;top:254.3px;width:3.2px;height:3.2px;background:#3c3c3c;border-radius:.5px"></div>
<div style="left:163px;top:233px;width:90px;height:35px;background:#fff;border-radius:5px;box-shadow:0 0 0 1px rgba(0,0,0,.05)"></div>
<svg style="left:169px;top:242px;" width="18" height="17" viewBox="0 0 18 17"><path d="M1.5 1.8 L16 15.5 M16 1.8 L1.5 15.5" stroke="#e23b3b" stroke-width="1.5" stroke-linecap="round"/></svg>
<svg style="left:197px;top:241px;" width="22" height="18" viewBox="0 0 22 18"><path d="M1.5 10 L7.5 16 L20.5 2" fill="none" stroke="#2ea043" stroke-width="1.6" stroke-linecap="round" stroke-linejoin="round"/></svg>
<div class="t" style="left:230px;top:236px;width:24px;height:26px;line-height:26px;font-size:21.5px;color:#3a3a3a;font-family:'Liberation Serif',serif;font-style:italic;font-weight:700;letter-spacing:-.6px">fx</div>
<div style="left:260px;top:233px;width:1649px;height:35px;background:#fff;border-radius:5px;box-shadow:0 0 0 1px rgba(0,0,0,.05)"></div>
<div class="t" style="left:273px;top:238px;width:400px;height:26px;line-height:26px;font-size:17.15px;color:#1c1c1c;text-align:left;"><span class="l">=IF(LARGE($G$16:$G$22,3)&gt;90,"</span>입상<span class="l">","")</span></div>
<svg style="left:1890px;top:246px;" width="14" height="8" viewBox="0 0 14 8"><path d="M1 1 L7 7 L13 1" fill="none" stroke="#333" stroke-width="1.4" stroke-linecap="round" stroke-linejoin="round"/></svg>
<div style="left:0px;top:276px;width:1894px;height:677px;background:#fff"></div>
<div style="left:36px;top:305px;width:1858px;height:648px;background-image:linear-gradient(to right,#e1e1e1 1px,transparent 1px),linear-gradient(to bottom,#e1e1e1 1px,transparent 1px);background-size:88px 2900px,8800px 29px;background-position:0 0,0 -1px"></div>
<div style="left:0px;top:276px;width:1894px;height:28px;background:#f0f0f0"></div>
<div style="left:0px;top:304px;width:1894px;height:1px;background:#a6a6a6"></div>
<svg style="left:10px;top:278px;" width="25" height="24" viewBox="0 0 25 24"><path d="M23 2.5 V22.7 H2.5 Z" fill="#dcdcdc"/></svg>
<div class="t" style="left:36.5px;top:275px;width:88px;height:26px;line-height:26px;font-size:15.98px;color:#444;text-align:center;"><span class="l">A</span></div>
<div style="left:36px;top:281px;width:1px;height:23px;background:#dedede"></div>
<div class="t" style="left:124.5px;top:275px;width:88px;height:26px;line-height:26px;font-size:15.98px;color:#444;text-align:center;"><span class="l">B</span></div>
<div style="left:124px;top:281px;width:1px;height:23px;background:#dedede"></div>
<div class="t" style="left:212.5px;top:275px;width:88px;height:26px;line-height:26px;font-size:15.98px;color:#444;text-align:center;"><span class="l">C</span></div>
<div style="left:212px;top:281px;width:1px;height:23px;background:#dedede"></div>
<div class="t" style="left:300.5px;top:275px;width:88px;height:26px;line-height:26px;font-size:15.98px;color:#444;text-align:center;"><span class="l">D</span></div>
<div style="left:300px;top:281px;width:1px;height:23px;background:#dedede"></div>
<div class="t" style="left:388.5px;top:275px;width:88px;height:26px;line-height:26px;font-size:15.98px;color:#444;text-align:center;"><span class="l">E</span></div>
<div style="left:388px;top:281px;width:1px;height:23px;background:#dedede"></div>
<div class="t" style="left:476.5px;top:275px;width:88px;height:26px;line-height:26px;font-size:15.98px;color:#444;text-align:center;"><span class="l">F</span></div>
<div style="left:476px;top:281px;width:1px;height:23px;background:#dedede"></div>
<div class="t" style="left:564.5px;top:275px;width:88px;height:26px;line-height:26px;font-size:15.98px;color:#444;text-align:center;"><span class="l">G</span></div>
<div style="left:564px;top:281px;width:1px;height:23px;background:#dedede"></div>
<div style="left:653px;top:276px;width:87px;height:27px;background:#e0e0e0"></div>
<div style="left:652px;top:303px;width:89px;height:2px;background:#1e7145"></div>
<div class="t" style="left:652.5px;top:275px;width:88px;height:26px;line-height:26px;font-size:15.98px;color:#1e7145;text-align:center;"><span class="l">H</span></div>
<div style="left:652px;top:281px;width:1px;height:23px;background:#dedede"></div>
<div class="t" style="left:740.5px;top:275px;width:88px;height:26px;line-height:26px;font-size:15.98px;color:#444;text-align:center;"><span class="l">I</span></div>
<div style="left:740px;top:281px;width:1px;height:23px;background:#dedede"></div>
<div class="t" style="left:828.5px;top:275px;width:88px;height:26px;line-height:26px;font-size:15.98px;color:#444;text-align:center;"><span class="l">J</span></div>
<div style="left:828px;top:281px;width:1px;height:23px;background:#dedede"></div>
<div class="t" style="left:916.5px;top:275px;width:88px;height:26px;line-height:26px;font-size:15.98px;color:#444;text-align:center;"><span class="l">K</span></div>
<div style="left:916px;top:281px;width:1px;height:23px;background:#dedede"></div>
<div class="t" style="left:1004.5px;top:275px;width:88px;height:26px;line-height:26px;font-size:15.98px;color:#444;text-align:center;"><span class="l">L</span></div>
<div style="left:1004px;top:281px;width:1px;height:23px;background:#dedede"></div>
<div class="t" style="left:1092.5px;top:275px;width:88px;height:26px;line-height:26px;font-size:15.98px;color:#444;text-align:center;"><span class="l">M</span></div>
<div style="left:1092px;top:281px;width:1px;height:23px;background:#dedede"></div>
<div class="t" style="left:1180.5px;top:275px;width:88px;height:26px;line-height:26px;font-size:15.98px;color:#444;text-align:center;"><span class="l">N</span></div>
<div style="left:1180px;top:281px;width:1px;height:23px;background:#dedede"></div>
<div class="t" style="left:1268.5px;top:275px;width:88px;height:26px;line-height:26px;font-size:15.98px;color:#444;text-align:center;"><span class="l">O</span></div>
<div style="left:1268px;top:281px;width:1px;height:23px;background:#dedede"></div>
<div class="t" style="left:1356.5px;top:275px;width:88px;height:26px;line-height:26px;font-size:15.98px;color:#444;text-align:center;"><span class="l">P</span></div>
<div style="left:1356px;top:281px;width:1px;height:23px;background:#dedede"></div>
<div class="t" style="left:1444.5px;top:275px;width:88px;height:26px;line-height:26px;font-size:15.98px;color:#444;text-align:center;"><span class="l">Q</span></div>
<div style="left:1444px;top:281px;width:1px;height:23px;background:#dedede"></div>
<div class="t" style="left:1532.5px;top:275px;width:88px;height:26px;line-height:26px;font-size:15.98px;color:#444;text-align:center;"><span class="l">R</span></div>
<div style="left:1532px;top:281px;width:1px;height:23px;background:#dedede"></div>
<div class="t" style="left:1620.5px;top:275px;width:88px;height:26px;line-height:26px;font-size:15.98px;color:#444;text-align:center;"><span class="l">S</span></div>
<div style="left:1620px;top:281px;width:1px;height:23px;background:#dedede"></div>
<div class="t" style="left:1708.5px;top:275px;width:88px;height:26px;line-height:26px;font-size:15.98px;color:#444;text-align:center;"><span class="l">T</span></div>
<div style="left:1708px;top:281px;width:1px;height:23px;background:#dedede"></div>
<div class="t" style="left:1796.5px;top:275px;width:88px;height:26px;line-height:26px;font-size:15.98px;color:#444;text-align:center;"><span class="l">U</span></div>
<div style="left:1796px;top:281px;width:1px;height:23px;background:#dedede"></div>
<div style="left:1884px;top:281px;width:1px;height:23px;background:#dedede"></div>
<div style="left:0px;top:305px;width:36px;height:648px;background:#f0f0f0"></div>
<div style="left:36px;top:305px;width:1px;height:648px;background:#c8c8c8"></div>
<div class="t" style="left:1px;top:305px;width:35px;height:29px;line-height:29px;font-size:15.98px;color:#444;text-align:center;"><span class="l">7</span></div>
<div style="left:0px;top:333px;width:35px;height:1px;background:#e2e2e2"></div>
<div class="t" style="left:1px;top:334px;width:35px;height:29px;line-height:29px;font-size:15.98px;color:#444;text-align:center;"><span class="l">8</span></div>
<div style="left:0px;top:362px;width:35px;height:1px;background:#e2e2e2"></div>
<div class="t" style="left:1px;top:363px;width:35px;height:29px;line-height:29px;font-size:15.98px;color:#444;text-align:center;"><span class="l">9</span></div>
<div style="left:0px;top:391px;width:35px;height:1px;background:#e2e2e2"></div>
<div class="t" style="left:1px;top:392px;width:35px;height:29px;line-height:29px;font-size:15.98px;color:#444;text-align:center;"><span class="l">10</span></div>
<div style="left:0px;top:420px;width:35px;height:1px;background:#e2e2e2"></div>
<div class="t" style="left:1px;top:421px;width:35px;height:29px;line-height:29px;font-size:15.98px;color:#444;text-align:center;"><span class="l">11</span></div>
<div style="left:0px;top:449px;width:35px;height:1px;background:#e2e2e2"></div>
<div class="t" style="left:1px;top:450px;width:35px;height:29px;line-height:29px;font-size:15.98px;color:#444;text-align:center;"><span class="l">12</span></div>
<div style="left:0px;top:478px;width:35px;height:1px;background:#e2e2e2"></div>
<div class="t" style="left:1px;top:479px;width:35px;height:29px;line-height:29px;font-size:15.98px;color:#444;text-align:center;"><span class="l">13</span></div>
<div style="left:0px;top:507px;width:35px;height:1px;background:#e2e2e2"></div>
<div class="t" style="left:1px;top:508px;width:35px;height:29px;line-height:29px;font-size:15.98px;color:#444;text-align:center;"><span class="l">14</span></div>
<div style="left:0px;top:536px;width:35px;height:1px;background:#e2e2e2"></div>
<div class="t" style="left:1px;top:537px;width:35px;height:29px;line-height:29px;font-size:15.98px;color:#444;text-align:center;"><span class="l">15</span></div>
<div style="left:0px;top:565px;width:35px;height:1px;background:#e2e2e2"></div>
<div style="left:0px;top:566px;width:35px;height:28px;background:#e0e0e0"></div>
<div style="left:35px;top:565px;width:2px;height:30px;background:#1e7145"></div>
<div class="t" style="left:1px;top:566px;width:35px;height:29px;line-height:29px;font-size:15.98px;color:#1e7145;text-align:center;"><span class="l">16</span></div>
<div style="left:0px;top:594px;width:35px;height:1px;background:#e2e2e2"></div>
<div class="t" style="left:1px;top:595px;width:35px;height:29px;line-height:29px;font-size:15.98px;color:#444;text-align:center;"><span class="l">17</span></div>
<div style="left:0px;top:623px;width:35px;height:1px;background:#e2e2e2"></div>
<div class="t" style="left:1px;top:624px;width:35px;height:29px;line-height:29px;font-size:15.98px;color:#444;text-align:center;"><span class="l">18</span></div>
<div style="left:0px;top:652px;width:35px;height:1px;background:#e2e2e2"></div>
<div class="t" style="left:1px;top:653px;width:35px;height:29px;line-height:29px;font-size:15.98px;color:#444;text-align:center;"><span class="l">19</span></div>
<div style="left:0px;top:681px;width:35px;height:1px;background:#e2e2e2"></div>
<div class="t" style="left:1px;top:682px;width:35px;height:29px;line-height:29px;font-size:15.98px;color:#444;text-align:center;"><span class="l">20</span></div>
<div style="left:0px;top:710px;width:35px;height:1px;background:#e2e2e2"></div>
<div class="t" style="left:1px;top:711px;width:35px;height:29px;line-height:29px;font-size:15.98px;color:#444;text-align:center;"><span class="l">21</span></div>
<div style="left:0px;top:739px;width:35px;height:1px;background:#e2e2e2"></div>
<div class="t" style="left:1px;top:740px;width:35px;height:29px;line-height:29px;font-size:15.98px;color:#444;text-align:center;"><span class="l">22</span></div>
<div style="left:0px;top:768px;width:35px;height:1px;background:#e2e2e2"></div>
<div class="t" style="left:1px;top:769px;width:35px;height:29px;line-height:29px;font-size:15.98px;color:#444;text-align:center;"><span class="l">23</span></div>
<div style="left:0px;top:797px;width:35px;height:1px;background:#e2e2e2"></div>
<div class="t" style="left:1px;top:798px;width:35px;height:29px;line-height:29px;font-size:15.98px;color:#444;text-align:center;"><span class="l">24</span></div>
<div style="left:0px;top:826px;width:35px;height:1px;background:#e2e2e2"></div>
<div class="t" style="left:1px;top:827px;width:35px;height:29px;line-height:29px;font-size:15.98px;color:#444;text-align:center;"><span class="l">25</span></div>
<div style="left:0px;top:855px;width:35px;height:1px;background:#e2e2e2"></div>
<div class="t" style="left:1px;top:856px;width:35px;height:29px;line-height:29px;font-size:15.98px;color:#444;text-align:center;"><span class="l">26</span></div>
<div style="left:0px;top:884px;width:35px;height:1px;background:#e2e2e2"></div>
<div class="t" style="left:1px;top:885px;width:35px;height:29px;line-height:29px;font-size:15.98px;color:#444;text-align:center;"><span class="l">27</span></div>
<div style="left:0px;top:913px;width:35px;height:1px;background:#e2e2e2"></div>
<div class="t" style="left:1px;top:914px;width:35px;height:29px;line-height:29px;font-size:15.98px;color:#444;text-align:center;"><span class="l">28</span></div>
<div style="left:0px;top:942px;width:35px;height:1px;background:#e2e2e2"></div>
<div class="t" style="left:1px;top:943px;width:35px;height:29px;line-height:29px;font-size:15.98px;color:#444;text-align:center;"><span class="l">29</span></div>
<div style="left:0px;top:971px;width:35px;height:1px;background:#e2e2e2"></div>
<div class="c" style="left:36px;top:304px;width:89px;height:30px;font-size:17.15px;border:1px solid #000;padding-left:.14em;"><span>인문</span></div>
<div class="c" style="left:124px;top:304px;width:89px;height:30px;font-size:17.15px;border:1px solid #000;"><span><span class="l">M0305</span></span></div>
<div class="c" style="left:212px;top:304px;width:89px;height:30px;font-size:17.15px;border:1px solid #000;"><span><span class="l">100</span></span></div>
<div class="c" style="left:300px;top:304px;width:89px;height:30px;font-size:17.15px;border:1px solid #000;"><span><span class="l">95</span></span></div>
<div class="c" style="left:476px;top:304px;width:89px;height:30px;font-size:17.15px;border:1px solid #000;padding-left:.14em;"><span>김혜진</span></div>
<div class="c" style="left:564px;top:304px;width:89px;height:30px;font-size:17.15px;border:1px solid #000;"><span><span class="l">68.815</span></span></div>
<div class="c" style="left:652px;top:304px;width:89px;height:30px;font-size:17.15px;border:1px solid #000;"><span><span class="l">182</span></span></div>
<div class="c" style="left:36px;top:333px;width:89px;height:30px;font-size:17.15px;border:1px solid #000;padding-left:.14em;"><span>자연</span></div>
<div class="c" style="left:124px;top:333px;width:89px;height:30px;font-size:17.15px;border:1px solid #000;"><span><span class="l">M0306</span></span></div>
<div class="c" style="left:212px;top:333px;width:89px;height:30px;font-size:17.15px;border:1px solid #000;"><span><span class="l">84</span></span></div>
<div class="c" style="left:300px;top:333px;width:89px;height:30px;font-size:17.15px;border:1px solid #000;"><span><span class="l">85</span></span></div>
<div class="c" style="left:476px;top:333px;width:89px;height:30px;font-size:17.15px;border:1px solid #000;padding-left:.14em;"><span>이명철</span></div>
<div class="c" style="left:564px;top:333px;width:89px;height:30px;font-size:17.15px;border:1px solid #000;"><span><span class="l">52.543</span></span></div>
<div class="c" style="left:652px;top:333px;width:89px;height:30px;font-size:17.15px;border:1px solid #000;"><span><span class="l">162</span></span></div>
<div class="c" style="left:36px;top:362px;width:89px;height:30px;font-size:17.15px;border:1px solid #000;padding-left:.14em;"><span>자연</span></div>
<div class="c" style="left:124px;top:362px;width:89px;height:30px;font-size:17.15px;border:1px solid #000;"><span><span class="l">M0307</span></span></div>
<div class="c" style="left:212px;top:362px;width:89px;height:30px;font-size:17.15px;border:1px solid #000;"><span><span class="l">59</span></span></div>
<div class="c" style="left:300px;top:362px;width:89px;height:30px;font-size:17.15px;border:1px solid #000;"><span><span class="l">64</span></span></div>
<div class="c" style="left:476px;top:362px;width:89px;height:30px;font-size:17.15px;border:1px solid #000;padding-left:.14em;"><span>김세나</span></div>
<div class="c" style="left:564px;top:362px;width:89px;height:30px;font-size:17.15px;border:1px solid #000;"><span><span class="l">58.652</span></span></div>
<div class="c" style="left:652px;top:362px;width:89px;height:30px;font-size:17.15px;border:1px solid #000;"><span><span class="l">177</span></span></div>
<div class="c" style="left:124px;top:420px;width:89px;height:30px;font-size:17.15px;border:1px solid #000;padding-left:.14em;"><span>계열</span></div>
<div class="c" style="left:212px;top:420px;width:177px;height:30px;font-size:17.15px;background:#d9d9d9;border:1px solid #000;padding-left:.14em;"><span>인문계열 영어 평균</span></div>
<div class="c" style="left:124px;top:449px;width:89px;height:30px;font-size:17.15px;border:1px solid #000;padding-left:.14em;"><span>인문</span></div>
<div class="c" style="left:212px;top:449px;width:177px;height:30px;font-size:17.15px;border:1px solid #000;"><span><span class="l">#</span>분산<span class="l">!</span></span></div>
<div class="c" style="left:476px;top:420px;width:265px;height:30px;font-size:17.15px;background:#d9d9d9;border:1px solid #000;padding-left:.14em;"><span>키가 <span class="l">170</span> 이상 <span class="l">180</span> 미만인 수</span></div>
<div class="c" style="left:476px;top:449px;width:265px;height:30px;font-size:17.15px;border:1px solid #000;"><span><span class="l">#</span>분산<span class="l">!</span></span></div>
<svg style="left:213px;top:450px;" width="8" height="8" viewBox="0 0 8 8"><path d="M0 0 H7 L0 7 Z" fill="#1e7b45"/></svg>
<svg style="left:477px;top:450px;" width="8" height="8" viewBox="0 0 8 8"><path d="M0 0 H7 L0 7 Z" fill="#1e7b45"/></svg>
<div class="c" style="left:36px;top:507px;width:89px;height:30px;font-size:17.15px;justify-content:flex-start;padding-left:4px;"><span><span class="l">[</span>표<span class="l">3]</span></span></div>
<div class="c" style="left:124px;top:507px;width:177px;height:30px;font-size:17.15px;font-weight:700;justify-content:flex-start;padding-left:4px;"><span>학과 정보</span></div>
<div class="c" style="left:476px;top:507px;width:89px;height:30px;font-size:17.15px;justify-content:flex-start;padding-left:4px;"><span><span class="l">[</span>표<span class="l">4]</span></span></div>
<div class="c" style="left:564px;top:507px;width:177px;height:30px;font-size:17.15px;font-weight:700;justify-content:flex-start;padding-left:4px;"><span>수학경진대회</span></div>
<div class="c" style="left:36px;top:536px;width:89px;height:30px;font-size:17.15px;border:1px solid #000;padding-left:.14em;"><span>학번</span></div>
<div class="c" style="left:124px;top:536px;width:89px;height:30px;font-size:17.15px;border:1px solid #000;padding-left:.14em;"><span>이름</span></div>
<div class="c" style="left:212px;top:536px;width:89px;height:30px;font-size:17.15px;background:#d9d9d9;border:1px solid #000;padding-left:.14em;"><span>학과</span></div>
<div class="c" style="left:476px;top:536px;width:89px;height:30px;font-size:17.15px;border:1px solid #000;padding-left:.14em;"><span>성명</span></div>
<div class="c" style="left:564px;top:536px;width:89px;height:30px;font-size:17.15px;border:1px solid #000;padding-left:.14em;"><span>점수</span></div>
<div class="c" style="left:652px;top:536px;width:89px;height:30px;font-size:17.15px;background:#d9d9d9;border:1px solid #000;padding-left:.14em;"><span>결과</span></div>
<div class="c" style="left:36px;top:565px;width:89px;height:30px;font-size:17.15px;border:1px solid #000;"><span><span class="l">2023101</span></span></div>
<div class="c" style="left:124px;top:565px;width:89px;height:30px;font-size:17.15px;border:1px solid #000;padding-left:.14em;"><span>김성식</span></div>
<div class="c" style="left:212px;top:565px;width:89px;height:30px;font-size:17.15px;border:1px solid #000;padding-left:.14em;"><span>전과자</span></div>
<div class="c" style="left:476px;top:565px;width:89px;height:30px;font-size:17.15px;border:1px solid #000;"></div>
<div class="c" style="left:564px;top:565px;width:89px;height:30px;font-size:17.15px;background:#ebeff9;border:1px solid #000;"></div>
<div class="c" style="left:652px;top:565px;width:89px;height:30px;font-size:17.15px;border:1px solid #000;"></div>
<div class="c" style="left:36px;top:594px;width:89px;height:30px;font-size:17.15px;border:1px solid #000;"><span><span class="l">2023201</span></span></div>
<div class="c" style="left:124px;top:594px;width:89px;height:30px;font-size:17.15px;border:1px solid #000;padding-left:.14em;"><span>김천일</span></div>
<div class="c" style="left:212px;top:594px;width:89px;height:30px;font-size:17.15px;border:1px solid #000;padding-left:.14em;"><span>경영과</span></div>
<div class="c" style="left:476px;top:594px;width:89px;height:30px;font-size:17.15px;border:1px solid #000;padding-left:.14em;"><span>이민호</span></div>
<div class="c" style="left:564px;top:594px;width:89px;height:30px;font-size:17.15px;background:#ebeff9;border:1px solid #000;"><span><span class="l">95</span></span></div>
<div class="c" style="left:652px;top:594px;width:89px;height:30px;font-size:17.15px;border:1px solid #000;padding-left:.14em;"><span>입상</span></div>
<div class="c" style="left:36px;top:623px;width:89px;height:30px;font-size:17.15px;border:1px solid #000;"><span><span class="l">2023102</span></span></div>
<div class="c" style="left:124px;top:623px;width:89px;height:30px;font-size:17.15px;border:1px solid #000;padding-left:.14em;"><span>나한일</span></div>
<div class="c" style="left:212px;top:623px;width:89px;height:30px;font-size:17.15px;border:1px solid #000;padding-left:.14em;"><span>전과자</span></div>
<div class="c" style="left:476px;top:623px;width:89px;height:30px;font-size:17.15px;border:1px solid #000;padding-left:.14em;"><span>서태훈</span></div>
<div class="c" style="left:564px;top:623px;width:89px;height:30px;font-size:17.15px;background:#ebeff9;border:1px solid #000;"><span><span class="l">83</span></span></div>
<div class="c" style="left:652px;top:623px;width:89px;height:30px;font-size:17.15px;border:1px solid #000;padding-left:.14em;"><span>입상</span></div>
<div class="c" style="left:36px;top:652px;width:89px;height:30px;font-size:17.15px;border:1px solid #000;"><span><span class="l">2023301</span></span></div>
<div class="c" style="left:124px;top:652px;width:89px;height:30px;font-size:17.15px;border:1px solid #000;padding-left:.14em;"><span>박정아</span></div>
<div class="c" style="left:212px;top:652px;width:89px;height:30px;font-size:17.15px;border:1px solid #000;padding-left:.14em;"><span>음악과</span></div>
<div class="c" style="left:476px;top:652px;width:89px;height:30px;font-size:17.15px;border:1px solid #000;padding-left:.14em;"><span>강수현</span></div>
<div class="c" style="left:564px;top:652px;width:89px;height:30px;font-size:17.15px;background:#ebeff9;border:1px solid #000;"><span><span class="l">92</span></span></div>
<div class="c" style="left:652px;top:652px;width:89px;height:30px;font-size:17.15px;border:1px solid #000;padding-left:.14em;"><span>입상</span></div>
<div class="c" style="left:36px;top:681px;width:89px;height:30px;font-size:17.15px;border:1px solid #000;"><span><span class="l">2023202</span></span></div>
<div class="c" style="left:124px;top:681px;width:89px;height:30px;font-size:17.15px;border:1px solid #000;padding-left:.14em;"><span>성진희</span></div>
<div class="c" style="left:212px;top:681px;width:89px;height:30px;font-size:17.15px;border:1px solid #000;padding-left:.14em;"><span>경영과</span></div>
<div class="c" style="left:476px;top:681px;width:89px;height:30px;font-size:17.15px;border:1px solid #000;padding-left:.14em;"><span>정미숙</span></div>
<div class="c" style="left:564px;top:681px;width:89px;height:30px;font-size:17.15px;background:#ebeff9;border:1px solid #000;"><span><span class="l">96</span></span></div>
<div class="c" style="left:652px;top:681px;width:89px;height:30px;font-size:17.15px;border:1px solid #000;padding-left:.14em;"><span>입상</span></div>
<div class="c" style="left:36px;top:710px;width:89px;height:30px;font-size:17.15px;border:1px solid #000;"><span><span class="l">2023402</span></span></div>
<div class="c" style="left:124px;top:710px;width:89px;height:30px;font-size:17.15px;border:1px solid #000;padding-left:.14em;"><span>이명호</span></div>
<div class="c" style="left:212px;top:710px;width:89px;height:30px;font-size:17.15px;border:1px solid #000;padding-left:.14em;"><span>회계과</span></div>
<div class="c" style="left:476px;top:710px;width:89px;height:30px;font-size:17.15px;border:1px solid #000;padding-left:.14em;"><span>김보람</span></div>
<div class="c" style="left:564px;top:710px;width:89px;height:30px;font-size:17.15px;background:#ebeff9;border:1px solid #000;"><span><span class="l">80</span></span></div>
<div class="c" style="left:652px;top:710px;width:89px;height:30px;font-size:17.15px;border:1px solid #000;padding-left:.14em;"><span>입상</span></div>
<div class="c" style="left:36px;top:739px;width:89px;height:30px;font-size:17.15px;border:1px solid #000;"><span><span class="l">2023203</span></span></div>
<div class="c" style="left:124px;top:739px;width:89px;height:30px;font-size:17.15px;border:1px solid #000;padding-left:.14em;"><span>최진성</span></div>
<div class="c" style="left:212px;top:739px;width:89px;height:30px;font-size:17.15px;border:1px solid #000;padding-left:.14em;"><span>경영과</span></div>
<div class="c" style="left:476px;top:739px;width:89px;height:30px;font-size:17.15px;border:1px solid #000;padding-left:.14em;"><span>최정민</span></div>
<div class="c" style="left:564px;top:739px;width:89px;height:30px;font-size:17.15px;background:#ebeff9;border:1px solid #000;"><span><span class="l">87</span></span></div>
<div class="c" style="left:652px;top:739px;width:89px;height:30px;font-size:17.15px;border:1px solid #000;padding-left:.14em;"><span>입상</span></div>
<div class="c" style="left:36px;top:797px;width:89px;height:30px;font-size:17.15px;justify-content:flex-start;padding-left:4px;"><span><span class="l">[</span>표<span class="l">5]</span></span></div>
<div class="c" style="left:124px;top:797px;width:177px;height:30px;font-size:17.15px;font-weight:700;justify-content:flex-start;padding-left:4px;"><span>강의 신청 현황</span></div>
<div class="c" style="left:36px;top:826px;width:177px;height:30px;font-size:17.15px;border:1px solid #000;padding-left:.14em;"><span>초과강의명</span></div>
<div class="c" style="left:212px;top:826px;width:177px;height:30px;font-size:17.15px;background:#d9d9d9;border:1px solid #000;padding-left:.14em;"><span>강의기호</span></div>
<div class="c" style="left:36px;top:855px;width:177px;height:30px;font-size:17.15px;border:1px solid #000;"><span><span class="l lu">ASP(</span>공개<span class="l lu">)_WEB</span></span></div>
<div class="c" style="left:212px;top:855px;width:177px;height:30px;font-size:17.15px;border:1px solid #000;"></div>
<div class="c" style="left:36px;top:884px;width:177px;height:30px;font-size:17.15px;border:1px solid #000;"><span><span class="l lu">JSP(</span>재수강<span class="l lu">)_WEB</span></span></div>
<div class="c" style="left:212px;top:884px;width:177px;height:30px;font-size:17.15px;border:1px solid #000;"></div>
<div class="c" style="left:36px;top:913px;width:177px;height:30px;font-size:17.15px;border:1px solid #000;"><span><span class="l lu">CGI(</span>교양<span class="l lu">)_WEB</span></span></div>
<div class="c" style="left:212px;top:913px;width:177px;height:30px;font-size:17.15px;border:1px solid #000;"></div>
<div class="c" style="left:36px;top:942px;width:177px;height:30px;font-size:17.15px;border:1px solid #000;"><span><span class="l lu">NSAPI(</span>교양<span class="l lu">)_ASP</span></span></div>
<div class="c" style="left:212px;top:942px;width:177px;height:30px;font-size:17.15px;border:1px solid #000;"></div>
<div style="left:563px;top:564px;width:2px;height:206px;background:#2f66cc"></div>
<div style="left:652px;top:564px;width:2px;height:206px;background:#2f66cc"></div>
<div style="left:563px;top:564px;width:91px;height:2px;background:#2f66cc"></div>
<div style="left:563px;top:768px;width:91px;height:2px;background:#2f66cc"></div>
<div style="left:561px;top:562px;width:5px;height:5px;background:#2f66cc;border:1px solid #fff"></div>
<div style="left:561px;top:765px;width:5px;height:5px;background:#2f66cc;border:1px solid #fff"></div>
<div style="left:649px;top:562px;width:5px;height:5px;background:#2f66cc;border:1px solid #fff"></div>
<div style="left:649px;top:765px;width:5px;height:5px;background:#2f66cc;border:1px solid #fff"></div>
<div style="left:656px;top:564px;width:86px;height:2px;background:#1e7145"></div>
<div style="left:651px;top:594px;width:86px;height:2px;background:#1e7145"></div>
<div style="left:739px;top:564px;width:2px;height:30px;background:#1e7145"></div>
<div style="left:737px;top:592px;width:7px;height:7px;background:#1e7145;border:1px solid #fff"></div>
<div style="left:477px;top:566px;width:334px;height:27px;background:#fff"></div>
<div class="t" style="left:478px;top:567px;width:340px;height:27px;line-height:27px;font-size:17.15px;color:#1c1c1c;text-align:left;"><span class="l" style="letter-spacing:-.1px">=IF(LARGE<span style="color:#d6336c">(</span><span style="color:#3f7ad8">$G$16:$G$22</span>,3<span style="color:#d6336c">)</span>&gt;90,"</span>입상<span class="l">","")</span></div>
<div style="left:730.5px;top:567px;width:1px;height:26px;background:#c8c8c8"></div>
<div style="left:490px;top:597px;width:322px;height:24px;background:#fff;border:1px solid #7a7a7a;border-radius:5px;box-sizing:border-box;box-shadow:0 5px 12px rgba(0,0,0,.22)"></div>
<div class="t" style="left:497px;top:597px;width:312px;height:23px;line-height:23px;font-size:14.73px;color:#747474;text-align:left;white-space:nowrap;letter-spacing:-0.1px;word-spacing:.4px">IF(<span style="color:#0a0aff;font-weight:700;text-decoration:underline">logical_test</span>, [value_if_true], [value_if_false])</div>
<div id="bb" style="left:0;top:953px;width:1920px;height:40px"></div>
<div style="left:1897px;top:277px;width:21px;height:679px;background:#f4f4f4;border-radius:10.5px"></div>
<svg style="left:1901px;top:281px;" width="13" height="11" viewBox="0 0 13 11"><path d="M6.5 1.8 L11.3 8.6 Q11.6 9.4 10.8 9.5 H2.2 Q1.4 9.4 1.7 8.6 Z" fill="#727272"/></svg>
<div style="left:1902px;top:420px;width:11px;height:460px;background:#727272;border-radius:5.5px"></div>
<svg style="left:1901px;top:941px;" width="13" height="11" viewBox="0 0 13 11"><path d="M6.5 9.2 L11.3 2.4 Q11.6 1.6 10.8 1.5 H2.2 Q1.4 1.6 1.7 2.4 Z" fill="#727272"/></svg>
<svg style="left:30px;top:965px;" width="12" height="15" viewBox="0 0 12 15"><path d="M9 1.5 L2.5 7.5 L9 13.5" fill="none" stroke="#b0b0b0" stroke-width="1.3"/></svg>
<svg style="left:71px;top:965px;" width="12" height="15" viewBox="0 0 12 15"><path d="M3 1.5 L9.5 7.5 L3 13.5" fill="none" stroke="#444" stroke-width="1.3"/></svg>
<div class="t" style="left:136px;top:959px;width:120px;height:28px;line-height:28px;font-size:17.5px;color:#444;text-align:center;letter-spacing:.085em">기본작업<span class="l">-1</span></div>
<div class="t" style="left:254.65px;top:959px;width:120px;height:28px;line-height:28px;font-size:17.5px;color:#444;text-align:center;letter-spacing:.085em">기본작업<span class="l">-2</span></div>
<div class="t" style="left:372.5px;top:959px;width:120px;height:28px;line-height:28px;font-size:17.5px;color:#444;text-align:center;letter-spacing:.085em">기본작업<span class="l">-3</span></div>
<div class="t" style="left:490.5px;top:959px;width:120px;height:28px;line-height:28px;font-size:17.5px;color:#444;text-align:center;letter-spacing:.085em">기본작업<span class="l">-4</span></div>
<div class="t" style="left:708.2px;top:959px;width:120px;height:28px;line-height:28px;font-size:17.5px;color:#444;text-align:center;letter-spacing:.085em">분석작업<span class="l">-1</span></div>
<div class="t" style="left:826.3px;top:959px;width:120px;height:28px;line-height:28px;font-size:17.5px;color:#444;text-align:center;letter-spacing:.085em">분석작업<span class="l">-2</span></div>
<div class="t" style="left:943.85px;top:959px;width:120px;height:28px;line-height:28px;font-size:17.5px;color:#444;text-align:center;letter-spacing:.085em">분석작업<span class="l">-3</span></div>
<div style="left:253px;top:961px;width:1px;height:23px;background:#cfcfd6"></div>
<div style="left:371.5px;top:961px;width:1px;height:23px;background:#cfcfd6"></div>
<div style="left:489px;top:961px;width:1px;height:23px;background:#cfcfd6"></div>
<div style="left:708px;top:961px;width:1px;height:23px;background:#cfcfd6"></div>
<div style="left:826px;top:961px;width:1px;height:23px;background:#cfcfd6"></div>
<div style="left:944px;top:961px;width:1px;height:23px;background:#cfcfd6"></div>
<div style="left:613px;top:953px;width:91px;height:35px;background:#fff;border-radius:0 0 6px 6px;box-shadow:0 1px 2px rgba(0,0,0,.12)"></div>
<div class="t" style="left:613px;top:955px;width:91px;height:28px;line-height:28px;font-size:17.5px;color:#1c1c1c;text-align:center;text-indent:.14em;letter-spacing:.1em">계산작업</div>
<div style="left:623.5px;top:982px;width:69px;height:2.3px;background:#107c41;border-radius:1px"></div>
<div style="left:1068.3px;top:970.3px;width:3.6px;height:3.6px;background:#3a3a3a;border-radius:50%"></div>
<div style="left:1073.6px;top:970.3px;width:3.6px;height:3.6px;background:#3a3a3a;border-radius:50%"></div>
<div style="left:1078.9px;top:970.3px;width:3.6px;height:3.6px;background:#3a3a3a;border-radius:50%"></div>
<svg style="left:1108px;top:965px;" width="16" height="16" viewBox="0 0 16 16"><path d="M8 1.5 V14.5 M1.5 8 H14.5" stroke="#333" stroke-width="1.4"/></svg>
<div style="left:1154.5px;top:967px;width:2.6px;height:2.6px;background:#444;border-radius:50%"></div>
<div style="left:1154.5px;top:972.5px;width:2.6px;height:2.6px;background:#444;border-radius:50%"></div>
<div style="left:1154.5px;top:978px;width:2.6px;height:2.6px;background:#444;border-radius:50%"></div>
<div style="left:1176px;top:962px;width:721px;height:21px;background:#f4f4f4;border-radius:10.5px"></div>
<svg style="left:1181px;top:966px;" width="11" height="13" viewBox="0 0 11 13"><path d="M1.8 6.5 L8.6 1.7 Q9.4 1.4 9.5 2.2 V10.8 Q9.4 11.6 8.6 11.3 Z" fill="#727272"/></svg>
<div style="left:1197px;top:967px;width:646px;height:11px;background:#727272;border-radius:5.5px"></div>
<svg style="left:1881px;top:966px;" width="11" height="13" viewBox="0 0 11 13"><path d="M9.2 6.5 L2.4 1.7 Q1.6 1.4 1.5 2.2 V10.8 Q1.6 11.6 2.4 11.3 Z" fill="#727272"/></svg>
<div style="left:0px;top:993px;width:1920px;height:23px;background:#f3f3f3"></div>
<div class="t" style="left:16px;top:995px;width:40px;height:24px;line-height:24px;font-size:14.29px;color:#333;text-align:left;">편집</div>
<svg style="left:68px;top:997px;" width="22" height="19" viewBox="68 997 22 19"><path d="M69.8 1013.3 V999.8 H86.3 V1004.5" fill="none" stroke="#3a3a3a" stroke-width="1.4"/><path d="M69.8 1002.6 H86.3" stroke="#3a3a3a" stroke-width="1.2"/><path d="M72 1005.5 H75.5 M72 1008.2 H74.8 M69.8 1013.3 H75.5" stroke="#3a3a3a" stroke-width="1.2"/><circle cx="81.3" cy="1010" r="4.5" fill="#f3f3f3" stroke="#3a3a3a" stroke-width="1.5"/><circle cx="81.3" cy="1010" r="2" fill="#2a2a2a"/></svg>
<svg style="left:107px;top:996px;" width="22" height="20" viewBox="107 996 22 20"><path d="M109.8 1002 L116.4 1004.6 L122.6 1002 M116.4 1004.6 V1008.6 L113.2 1015.2 M116.4 1008.6 L118.2 1010.8" fill="none" stroke="#2e2e2e" stroke-width="3.3" stroke-linecap="round" stroke-linejoin="round"/><path d="M109.8 1002 L116.4 1004.6 L122.6 1002 M116.4 1004.6 V1008.6 L113.2 1015.2 M116.4 1008.6 L118.2 1010.8" fill="none" stroke="#f3f3f3" stroke-width="1.1" stroke-linecap="round" stroke-linejoin="round"/><circle cx="116.4" cy="1000.6" r="1.9" fill="#f3f3f3" stroke="#2e2e2e" stroke-width="1.2"/><path d="M119.3 1008.3 L126.5 1015.6 M126.5 1008.3 L119.3 1015.6" stroke="#2e2e2e" stroke-width="1.3"/></svg>
<div class="t" style="left:131px;top:995px;width:140px;height:24px;line-height:24px;font-size:14.29px;color:#222;text-align:left;">접근성<span class="l">:</span> 조사 필요</div>
<svg style="left:1558px;top:997px;" width="20" height="18" viewBox="0 0 20 18"><rect x="1.5" y="1.5" width="16" height="15" fill="none" stroke="#bdbdbd" stroke-width="1.3"/><path d="M1.5 6.5 H17.5 M1.5 11.5 H17.5 M7 1.5 V16.5 M12.5 1.5 V16.5" stroke="#bdbdbd" stroke-width="1.2"/></svg>
<svg style="left:1608px;top:997px;" width="20" height="18" viewBox="0 0 20 18"><rect x="1.5" y="1.5" width="16.5" height="15" fill="none" stroke="#bdbdbd" stroke-width="1.3"/><rect x="5" y="4.5" width="9.5" height="9.5" fill="none" stroke="#bdbdbd" stroke-width="1.2"/><path d="M7 7.5 H12.5 M7 10.5 H12.5" stroke="#bdbdbd" stroke-width="1.1"/></svg>
<svg style="left:1658px;top:997px;" width="20" height="18" viewBox="0 0 20 18"><rect x="1.5" y="1.5" width="16.5" height="15" fill="none" stroke="#bdbdbd" stroke-width="1.3"/><path d="M5.5 1.5 V9.5 H10 V1.5 M10 9.5 H18" fill="none" stroke="#bdbdbd" stroke-width="1.2"/></svg>
<div style="left:1700px;top:1007px;width:10px;height:1.2px;background:#bdbdbd"></div>
<div style="left:1716px;top:1007px;width:125px;height:1.2px;background:#6a6a6a"></div>
<div style="left:1778px;top:1004px;width:1.3px;height:8px;background:#4a4a4a"></div>
<svg style="left:1846px;top:1002px;" width="12" height="12" viewBox="0 0 12 12"><path d="M6 1 V11 M1 6 H11" stroke="#bdbdbd" stroke-width="1.2"/></svg>
<div class="t" style="left:1868px;top:996px;width:44px;height:22px;line-height:22px;font-size:14.29px;color:#b4b4b4;text-align:right;"><span class="l">100%</span></div>
</div></body></html>
